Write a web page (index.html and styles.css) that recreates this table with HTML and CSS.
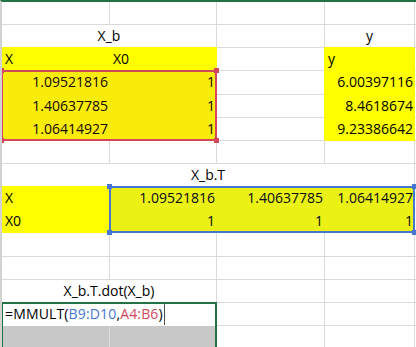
FILE: index.html
```html
<!DOCTYPE html>
<html lang="en">
<head>
    <meta charset="UTF-8">
    <meta name="viewport" content="width=device-width, initial-scale=1.0">
    <title>MMULT</title>
    <link rel="stylesheet" href="styles.css">
</head>
<body>
    <div class="sheet">
        <div class="grid cells">
            <!-- row 1 -->
            <div class="cell"></div><div class="cell"></div><div class="cell"></div><div class="cell"></div><div class="cell"></div>

            <!-- row 2 -->
            <div class="cell span-ab center">X_b</div><div class="cell"></div><div class="cell center">y</div><div class="cell"></div>

            <!-- row 3 -->
            <div class="cell fill">X</div><div class="cell fill">X0</div><div class="cell"></div><div class="cell fill edge">y</div><div class="cell"></div>

            <!-- rows 4-6 -->
            <div class="cell fill num">1.09521816</div><div class="cell fill num">1</div><div class="cell"></div><div class="cell fill edge num">6.00397116</div><div class="cell"></div>
            <div class="cell fill num">1.40637785</div><div class="cell fill num">1</div><div class="cell"></div><div class="cell fill edge num">8.4618674</div><div class="cell"></div>
            <div class="cell fill num">1.06414927</div><div class="cell fill num">1</div><div class="cell"></div><div class="cell fill edge num">9.23386642</div><div class="cell"></div>

            <!-- row 7 -->
            <div class="cell"></div><div class="cell"></div><div class="cell"></div><div class="cell"></div><div class="cell"></div>

            <!-- row 8 -->
            <div class="cell span-ad center">X_b.T</div><div class="cell"></div>

            <!-- rows 9-10 -->
            <div class="cell fill">X</div><div class="cell fill num">1.09521816</div><div class="cell fill num">1.40637785</div><div class="cell fill num">1.06414927</div><div class="cell"></div>
            <div class="cell fill">X0</div><div class="cell fill num">1</div><div class="cell fill num">1</div><div class="cell fill num">1</div><div class="cell"></div>

            <!-- rows 11-12 -->
            <div class="cell"></div><div class="cell"></div><div class="cell"></div><div class="cell"></div><div class="cell"></div>
            <div class="cell"></div><div class="cell"></div><div class="cell"></div><div class="cell"></div><div class="cell"></div>

            <!-- row 13 -->
            <div class="cell span-ab center">X_b.T.dot(X_b)</div><div class="cell"></div><div class="cell"></div><div class="cell"></div>

            <!-- row 14: cell being edited -->
            <div class="cell span-ab editor">=MMULT(<span class="ref-blue-text">B9:D10</span>,<span class="ref-red-text">A4:B6</span>)<span class="caret"></span></div><div class="cell"></div><div class="cell"></div><div class="cell"></div>

            <!-- row 15 -->
            <div class="cell spill"></div><div class="cell spill last"></div><div class="cell"></div><div class="cell"></div><div class="cell"></div>
        </div>

        <!-- highlight layer: same tracks as the cells -->
        <div class="grid marks">
            <div class="ref ref-red">
                <i class="h tl"></i><i class="h tr"></i><i class="h bl"></i><i class="h br"></i>
            </div>
            <div class="ref ref-blue">
                <i class="h tl"></i><i class="h tr"></i><i class="h bl"></i><i class="h br"></i>
            </div>
            <div class="edit-frame"></div>
        </div>
    </div>
</body>
</html>
```

FILE: styles.css
```css
:root {
    --grid: #dadada;
    --yellow: #ffff00;
    --green: #217346;
    --red: #d2475a;
    --blue: #4676d0;
}
html, body {
    margin: 0;
    overflow: hidden;
}
body {
    background: #fff;
    font-family: "Open Sans", "Liberation Sans", sans-serif;
    font-size: 14px;
    color: #000;
}
.sheet {
    position: relative;
    height: 345px;
    border-top: 2px solid var(--green);
    border-left: 2px solid #d2d2d2;
    overflow: hidden;
}
.grid {
    display: grid;
    grid-template-columns: 108px 107px 108px 90px 1fr;
    grid-template-rows: 23px 23px 23px 24px 23px 23px 23px 23px 23px 23px 24px 23px 23px 23px 24px;
}
.marks {
    position: absolute;
    inset: 0;
}
.cell {
    box-sizing: border-box;
    border-right: 1px solid var(--grid);
    border-bottom: 1px solid var(--grid);
    padding: 0 3px;
    line-height: 22px;
    white-space: nowrap;
}
.num {
    text-align: right;
    padding-right: 1px;
}
.center {
    text-align: center;
}
.span-ab {
    grid-column: span 2;
}
.span-ad {
    grid-column: span 4;
}
/* filled cells hide the gridlines around them */
.fill {
    background: var(--yellow);
    border-color: var(--yellow);
    box-shadow: 0 -1px 0 var(--yellow);
}
.fill.edge {
    box-shadow: -1px -1px 0 var(--yellow);
}
.editor {
    background: #fff;
    border-color: #fff;
    display: flex;
    letter-spacing: 0.15px;
}
.ref-blue-text { color: var(--blue); }
.ref-red-text { color: var(--red); }
.caret {
    display: inline-block;
    width: 1px;
    height: 22px;
    margin-left: 1px;
    background: #505050;
}
.spill {
    background: #c8c8c8;
    border-right-color: #dcdcdc;
    border-bottom: none;
}
.spill.last {
    border-right: none;
}
/* formula reference ranges */
.ref {
    position: relative;
    box-sizing: border-box;
    margin: -1px 0 0 -1px;
    border: 2px solid;
    background-clip: padding-box;
}
.ref-red {
    grid-area: 4 / 1 / 7 / 3;
    color: var(--red);
    background-color: rgba(210, 71, 90, 0.1);
}
.ref-blue {
    grid-area: 9 / 2 / 11 / 5;
    color: var(--blue);
    background-color: rgba(70, 118, 208, 0.1);
}
.h {
    position: absolute;
    width: 5px;
    height: 5px;
    background: currentColor;
}
.h.tl { top: -4px; left: -4px; }
.h.tr { top: -4px; right: -4px; }
.h.bl { bottom: -4px; left: -4px; }
.h.br { bottom: -4px; right: -4px; }
.edit-frame {
    grid-area: 14 / 1 / 16 / 3;
    box-sizing: border-box;
    margin: -1px 0 0 -1px;
    border: 2px solid var(--green);
    border-bottom: none;
}
```
